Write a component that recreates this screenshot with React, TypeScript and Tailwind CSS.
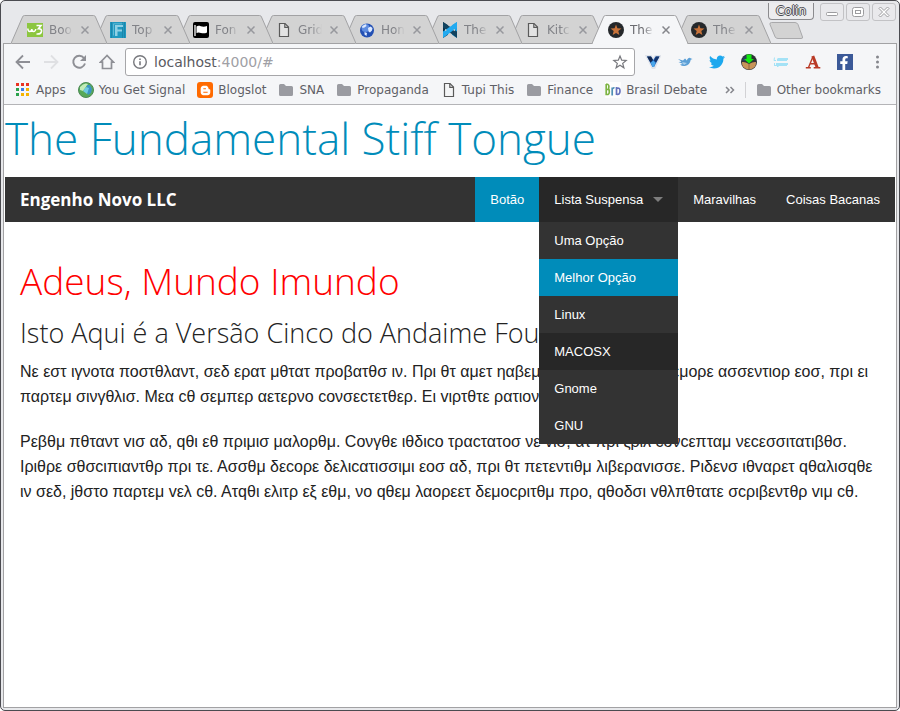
import React from "react";
import type { ReactNode } from "react";
import { FaBloggerB, FaFacebookF, FaTwitter } from "react-icons/fa";

/* ---------- icons ---------- */

function W3Icon() {
  return (
    <svg className="size-4" viewBox="0 0 16 16" fill="none" stroke="#fff">
      <rect y="1" width="16" height="14" fill="#8cc63f" stroke="none" />
      <path d="M.8 6.500q.2 3 2 3t2-2.500q0 2.500 1.800 2.500t2.200-2.500" strokeWidth="1.500" />
      <path d="M9.500 3.500h4.500l-2.500 3.200q3.500-.2 3 2.800-.8 3-5 2.500" strokeWidth="1.600" />
    </svg>
  );
}

function FoundationIcon() {
  return (
    <svg className="size-4" viewBox="0 0 16 16">
      <rect width="16" height="16" fill="#2199c0" />
      <path d="M1.500 0v16M12.500 0v16M14.500 0v16" stroke="#1b86ab" />
      <path d="M5 14V3h8v2H7.500v2.500H12v2H7.500V14z" fill="#8fd0e4" />
      <path d="M3.500 13.500V1.800h9" stroke="#62b9d4" fill="none" />
    </svg>
  );
}

function FlagIcon() {
  return (
    <svg className="size-4" viewBox="0 0 16 16">
      <rect width="16" height="16" rx="2" fill="#000" />
      <path d="M2 3v11" stroke="#fff" strokeWidth="1.300" />
      <path d="M3.500 4.500c3-2 5 1.500 10.500-.5v6.500c-5 2.500-7-1.500-10.500.5z" fill="#fff" />
    </svg>
  );
}

function PageIcon() {
  return (
    <svg className="size-4" viewBox="0 0 16 16" fill="none" stroke="#5a5a5a" strokeWidth="1.200">
      <path d="M3.500 1.500h5.500l3.500 3.500v9.500h-9z" fill="#f4f4f4" fillOpacity=".5" />
      <path d="M8.800 1.500v3.800h3.700" />
    </svg>
  );
}

function GlobeIcon() {
  return (
    <svg className="size-4" viewBox="0 0 16 16">
      <circle cx="8" cy="8.500" r="7" fill="#2350b4" />
      <circle cx="6.500" cy="6" r="4" fill="#5f8de0" />
      <path d="M3 4.500q2-2 4-2.200l.5 1.700-2 1.500-2 .5zM9 6l2.500-1.500 2 1.500-.5 2.500-2 2-1.500-1zM5.500 10l2.500 1-.5 3-2-1.500z" fill="#dce9ff" />
    </svg>
  );
}

function BackboneIcon() {
  return (
    <svg className="size-4" viewBox="0 0 16 16">
      <path d="M1 0l5 3.200v9.600L1 16z" fill="#0a2f47" />
      <path d="M15 0l-5 3.200v9.600l5 3.200z" fill="#1fa3e6" />
      <path d="M1 5.500V0l14 9.500V16z" fill="#12435f" />
      <path d="M15 5.500V0L1 9.500V16z" fill="#22aaf0" />
      <path d="M6.500 2.800L8 3.800l1.500-1L8 1.500zM6.500 13.200l1.500-1 1.500 1L8 14.500z" fill="#d3d3d3" />
      <path d="M3 7l2 .9-2 1.300zM13 7l-2 .9 2 1.300z" fill="#d3d3d3" />
    </svg>
  );
}

function StarBadgeIcon() {
  return (
    <svg className="size-4" viewBox="0 0 16 16">
      <circle cx="8" cy="8" r="8" fill="#25282b" />
      <path d="M8 2.500l1.400 3.800 4.100.2-3.200 2.600 1.100 4L8 10.900l-3.400 2.200 1.100-4L2.500 6.500l4.100-.2z" fill="#c8733a" />
    </svg>
  );
}

function CloseIcon() {
  return (
    <svg className="size-2" viewBox="0 0 8 8" stroke="currentColor" strokeWidth="1.500">
      <path d="M.5.5l7 7M7.500.5l-7 7" />
    </svg>
  );
}

function FolderIcon() {
  return (
    <svg className="size-4" viewBox="0 0 16 16" fill="#9a9ba1">
      <path d="M1 3.500Q1 2 2.500 2H6l2 2h5.500Q15 4 15 5.500v7q0 1.500-1.500 1.500h-11Q1 14 1 12.500z" />
    </svg>
  );
}

function AppsIcon() {
  const cells = ["#ea3323", "#ea3323", "#ea3323", "#2ba24c", "#3b7de8", "#f5b400", "#2ba24c", "#f5b400", "#f5b400"];
  return (
    <svg className="size-4" viewBox="0 0 16 16">
      {cells.map((c, i) => (
        <rect key={i} x={1 + (i % 3) * 5} y={1 + Math.floor(i / 3) * 5} width="3" height="3" fill={c} />
      ))}
    </svg>
  );
}

function SignalIcon() {
  return (
    <svg className="size-4" viewBox="0 0 16 16">
      <circle cx="8" cy="8" r="7.500" fill="#58a858" stroke="#4d8a56" />
      <path d="M2 5q4-5 8-3L5 9l-3-1z" fill="#c2ecb8" />
      <path d="M9 3l3 0 2 4-1 4-3 2-2-4z" fill="#3b94c4" />
      <path d="M5 9l3-4 3 1-2 6z" fill="#6fcbe3" />
    </svg>
  );
}

function BloggerIcon() {
  return (
    <span className="flex size-4 items-center justify-center rounded-[3px] bg-[#ff6a00] text-white">
      <FaBloggerB size={11} />
    </span>
  );
}

function BroIcon() {
  return (
    <svg className="size-4" viewBox="0 0 16 16">
      <rect width="16" height="16" fill="#fdfdfd" />
      <g fill="none" strokeWidth="1.700">
        <path d="M1.200 2v10.500h1.800q2-1 1-5H1.200M3.500 7q1.500-5-2.300-5" stroke="#7cb342" />
        <path d="M7.200 5.500v8M7.200 7q1-1.500 2.300-1" stroke="#4f8fb5" />
        <path d="M11.500 5v8M11.500 6.500q3.500-1.500 3.500 2.500t-3.500 3.200" stroke="#6672bd" />
      </g>
    </svg>
  );
}

function BackIcon() {
  return (
    <svg className="size-4" viewBox="0 0 16 16" fill="none" stroke="currentColor" strokeWidth="1.800">
      <path d="M15 8H2M8 1.500L1.500 8 8 14.500" />
    </svg>
  );
}

function ForwardIcon() {
  return (
    <svg className="size-4" viewBox="0 0 16 16" fill="none" stroke="currentColor" strokeWidth="1.800">
      <path d="M1 8h13M8 1.500L14.500 8 8 14.500" />
    </svg>
  );
}

function ReloadIcon() {
  return (
    <svg className="size-4" viewBox="0 0 16 16">
      <path d="M13 4A6 6 0 1 0 14 9.500" fill="none" stroke="currentColor" strokeWidth="1.900" />
      <path d="M15 1v6H9z" fill="currentColor" />
    </svg>
  );
}

function HomeIcon() {
  return (
    <svg className="size-4" viewBox="0 0 16 16" fill="none" stroke="currentColor" strokeWidth="1.700">
      <path d="M8 1.500L1.500 8.200H3.500V14.500h9V8.200h2z" />
    </svg>
  );
}

function InfoIcon() {
  return (
    <svg className="size-4" viewBox="0 0 16 16" fill="none" stroke="#77787d" strokeWidth="1.400">
      <circle cx="8" cy="8" r="6.300" />
      <path d="M8 7.200v4M8 4.500v1.500" strokeWidth="1.600" />
    </svg>
  );
}

function StarIcon() {
  return (
    <svg className="size-4" viewBox="0 0 16 16" fill="none" stroke="#77787d" strokeWidth="1.200">
      <path d="M8 2l1.700 4.200 4.500.3-3.500 2.900 1.200 4.400L8 11.300l-3.900 2.500 1.200-4.400L1.800 6.500l4.500-.3z" />
    </svg>
  );
}

function VIcon() {
  return (
    <svg className="size-4" viewBox="0 0 16 16">
      <path d="M1.500 2h4.500l2.200 3.500L10.500 2H15L9.500 14h-2z" fill="#fff" stroke="#dfe3ea" strokeWidth="2" />
      <path d="M2 2.500h4L8.300 6l2.200-3.500H14.500L9 13H7.500z" fill="#1d5fb8" />
      <path d="M2 2.500h4L8 6 5.500 8.500z" fill="#14284f" />
      <path d="M11 2.500h3.500l-3.500 6-2-2z" fill="#16346b" />
      <path d="M8.300 6.500l2.200 2.200L9 13H7.500L5.800 8.800z" fill="#4aa6ea" />
    </svg>
  );
}

function SmallBirdIcon() {
  return (
    <svg className="size-4" viewBox="0 0 16 16">
      <path d="M1 5l5 1.500L8 4.500q1 .5 1.500 2l1.500-2q1.500-1.500 3 0l1.500.5-1.800.8Q13 11 8 12q-3 .5-5-1.500l3-.5L1.500 8l3-.2z" fill="#5b9fd6" />
      <path d="M5 8l5 1-3 2z" fill="#a9d0ee" />
    </svg>
  );
}

function DownloadIcon() {
  return (
    <svg className="size-4" viewBox="0 0 16 16">
      <circle cx="8" cy="8" r="8" fill="#2f3236" />
      <path d="M1 8q3-.5 7 2 4-2.500 7-2 .5 7-7 7.500Q.5 15 1 8z" fill="#c8955a" />
      <path d="M8 10v5.500" stroke="#7d5a34" strokeWidth=".8" />
      <path d="M1 6.500q1-4 4.500-5.500V5l-1.500 2z" fill="#28405f" />
      <path d="M5.500 .5h5v4.500H13L8 9.500 3 5h2.500z" fill="#12e812" />
    </svg>
  );
}

function LoremIcon() {
  return (
    <svg className="size-4" viewBox="0 0 16 16" stroke="#a4e2f6" fill="none">
      <path d="M1.500 3.500l-.5 3h2M4 5.500h11M4.500 4.500h10.500M4 6.500h10" strokeWidth="1" />
      <path d="M1.500 9v2.500M3 9.500h12M3 10.500h12M1 11.500h13M4 12.500h1.500" strokeWidth="1" />
    </svg>
  );
}

function LetterAIcon() {
  return (
    <svg className="size-4" viewBox="0 0 16 16" stroke="#b93a26" fill="none">
      <path d="M7.800 2l4.400 11.500" strokeWidth="3" />
      <path d="M7.800 3L3.500 13.500M5 9.800h6" strokeWidth="1.400" />
      <path d="M.8 13.800h5M8.700 13.800h6.600" strokeWidth="1.400" />
    </svg>
  );
}

function FacebookIcon() {
  return (
    <span className="flex size-4 items-end justify-end bg-[#3b5998] pr-[2px] text-white">
      <FaFacebookF size={14} />
    </span>
  );
}

/* ---------- browser tabs ---------- */

type Tab = { title: string; icon: ReactNode; layer: string; active?: boolean };

const tabs: Tab[] = [
  { title: "Boo", icon: <W3Icon />, layer: "z-9" },
  { title: "Top", icon: <FoundationIcon />, layer: "z-8" },
  { title: "Fon", icon: <FlagIcon />, layer: "z-7" },
  { title: "Grid", icon: <PageIcon />, layer: "z-6" },
  { title: "Hon", icon: <GlobeIcon />, layer: "z-5" },
  { title: "The", icon: <BackboneIcon />, layer: "z-4" },
  { title: "Kitc", icon: <PageIcon />, layer: "z-3" },
  { title: "The", icon: <StarBadgeIcon />, layer: "z-10", active: true },
  { title: "The", icon: <StarBadgeIcon />, layer: "z-1" },
];

function BrowserTab({ tab }: { tab: Tab }) {
  return (
    <div className={`relative -mr-[13px] flex h-[29px] w-24 items-center pl-4 ${tab.layer}`}>
      <svg className="absolute inset-0 -z-1 h-[29px] w-24" viewBox="0 0 96 29">
        <path
          d="M0 28.500L11.500 2Q12 .5 13.500 .5H82.500Q84 .5 84.500 2L96 28.500"
          fill={tab.active ? "#f5f6f8" : "#d3d3d3"}
          stroke="#a2a2a4"
        />
        <path d="M1 28.500H95" stroke={tab.active ? "#f5f6f8" : "#a2a2a4"} />
      </svg>
      {tab.icon}
      <span
        className={`ml-[6px] w-6 overflow-hidden text-xs whitespace-nowrap [mask-image:linear-gradient(to_right,#000_55%,transparent)] ${
          tab.active ? "text-[#6a6b70]" : "text-[#828388]"
        }`}
      >
        {tab.title}
      </span>
      <button
        type="button"
        aria-label="Close tab"
        className={`ml-2 ${tab.active ? "text-[#85868b]" : "text-[#97989d]"}`}
      >
        <CloseIcon />
      </button>
    </div>
  );
}

function WindowButton({ label, children }: { label: string; children: ReactNode }) {
  return (
    <button
      type="button"
      aria-label={label}
      className="flex h-[18px] w-6 items-center justify-center rounded-[3px] border border-[#c2c2c5] bg-[#e9e9ec]"
    >
      <svg className="h-3 w-3" viewBox="0 0 12 12" fill="#fff" stroke="#9c9c9f">
        {children}
      </svg>
    </button>
  );
}

function TitleBar() {
  return (
    <header>
      <div className="flex h-[14px] items-start justify-end gap-[2px] pt-[2px] pr-[3px]">
        <button
          type="button"
          className="mr-1 h-[17px] rounded-b-[4px] border border-t-0 border-[#8b8b8e] bg-[#ececee] px-[7px] text-xs leading-4 text-[#e9e9ec] [text-shadow:1px_0_#4c4c50,-1px_0_#4c4c50,0_1px_#4c4c50,0_-1px_#4c4c50]"
        >
          Colin
        </button>
        <WindowButton label="Minimize">
          <rect x=".5" y="6.500" width="11" height="3" rx="1" />
        </WindowButton>
        <WindowButton label="Maximize">
          <rect x=".5" y="1.500" width="11" height="9" rx="2" />
          <rect x="3.500" y="4.500" width="5" height="3" />
        </WindowButton>
        <WindowButton label="Close">
          <path d="M1 2.500L2.500 1 6 4.500 9.500 1 11 2.500 7.500 6 11 9.500 9.500 11 6 7.500 2.500 11 1 9.500 4.500 6z" />
        </WindowButton>
      </div>
      <div className="flex pl-[10px]">
        {tabs.map((tab, i) => (
          <BrowserTab key={i} tab={tab} />
        ))}
        <button type="button" aria-label="New tab" className="mt-[7px] ml-[11px] h-[17px]">
          <svg className="h-[17px] w-9" viewBox="0 0 36 17">
            <path d="M2.500 .5H26Q28 .5 29 2.500L33.500 15q.5 1.500-1.500 1.500H9Q7 16.500 6.200 15L1 2.500Q.5 .5 2.500 .5z" fill="#d3d3d3" stroke="#a9a9ab" />
          </svg>
        </button>
      </div>
    </header>
  );
}

/* ---------- toolbar ---------- */

function ToolButton({ label, children, faint }: { label: string; children: ReactNode; faint?: boolean }) {
  return (
    <button
      type="button"
      aria-label={label}
      className={`flex h-7 w-7 shrink-0 items-center justify-center ${faint ? "text-[#dfe0e3]" : "text-[#8e8f95]"}`}
    >
      {children}
    </button>
  );
}

const extensions: { label: string; icon: ReactNode }[] = [
  { label: "V", icon: <VIcon /> },
  { label: "Bird", icon: <SmallBirdIcon /> },
  { label: "Twitter", icon: <FaTwitter size={16} color="#1da8ee" /> },
  { label: "Downloader", icon: <DownloadIcon /> },
  { label: "Lorem Ipsum", icon: <LoremIcon /> },
  { label: "Fonts", icon: <LetterAIcon /> },
  { label: "Facebook", icon: <FacebookIcon /> },
];

function Toolbar() {
  return (
    <div className="flex h-8 items-end pr-[3px] pl-[5px]">
      <ToolButton label="Back"><BackIcon /></ToolButton>
      <ToolButton label="Forward" faint><ForwardIcon /></ToolButton>
      <ToolButton label="Reload"><ReloadIcon /></ToolButton>
      <ToolButton label="Home"><HomeIcon /></ToolButton>
      <div className="mr-[2px] ml-1 flex h-7 min-w-0 flex-1 items-center rounded-[3px] border border-[#a6a6a9] bg-white px-[6px] text-sm">
        <InfoIcon />
        <label htmlFor="address" className="ml-[6px] text-[#5a5a5f]">localhost</label>
        <input
          id="address"
          defaultValue=":4000/#"
          className="min-w-0 flex-1 bg-transparent text-[#a0a0a5] outline-none"
        />
        <button type="button" aria-label="Bookmark this page"><StarIcon /></button>
      </div>
      {extensions.map((e) => (
        <button key={e.label} type="button" aria-label={e.label} className="flex h-7 w-8 shrink-0 items-center justify-center">
          {e.icon}
        </button>
      ))}
      <button type="button" aria-label="Menu" className="flex h-7 w-8 shrink-0 items-center justify-center">
        <svg className="size-4" viewBox="0 0 16 16" fill="#85868c">
          <circle cx="8.500" cy="3" r="1.500" />
          <circle cx="8.500" cy="8" r="1.500" />
          <circle cx="8.500" cy="13" r="1.500" />
        </svg>
      </button>
    </div>
  );
}

const bookmarks: { label: string; icon: ReactNode }[] = [
  { label: "Apps", icon: <AppsIcon /> },
  { label: "You Get Signal", icon: <SignalIcon /> },
  { label: "Blogslot", icon: <BloggerIcon /> },
  { label: "SNA", icon: <FolderIcon /> },
  { label: "Propaganda", icon: <FolderIcon /> },
  { label: "Tupi This", icon: <PageIcon /> },
  { label: "Finance", icon: <FolderIcon /> },
  { label: "Brasil Debate", icon: <BroIcon /> },
];

function Bookmark({ label, icon }: { label: string; icon: ReactNode }) {
  return (
    <a href="#" className="flex items-center gap-[5px] whitespace-nowrap">
      {icon}
      {label}
    </a>
  );
}

function BookmarksBar() {
  return (
    <div className="flex h-[29px] items-center gap-3 border-b border-[#b4b4b7] pr-[15px] pl-[11px] text-xs text-[#5f6066]">
      {bookmarks.map((b) => (
        <Bookmark key={b.label} label={b.label} icon={b.icon} />
      ))}
      <div className="ml-auto flex items-center gap-[10px]">
        <button type="button" aria-label="More bookmarks">
          <svg className="h-2 w-[10px]" viewBox="0 0 10 8" fill="none" stroke="#85868c" strokeWidth="1.500">
            <path d="M1 1L4 4 1 7M5.500 1L8.500 4 5.500 7" />
          </svg>
        </button>
        <span className="h-4 w-px bg-[#d2d2d5]" />
        <Bookmark label="Other bookmarks" icon={<FolderIcon />} />
      </div>
    </div>
  );
}

/* ---------- page ---------- */

const options = [
  { label: "Uma Opção", tone: "bg-[#333333]" },
  { label: "Melhor Opção", tone: "bg-[#008cba]" },
  { label: "Linux", tone: "bg-[#333333]" },
  { label: "MACOSX", tone: "bg-[#272727]" },
  { label: "Gnome", tone: "bg-[#333333]" },
  { label: "GNU", tone: "bg-[#333333]" },
];

function TopBar() {
  return (
    <nav className="flex h-[45px] items-stretch justify-between bg-[#333333] leading-[45px] text-white">
      <a href="#" className="px-[15px] font-['Open_Sans',sans-serif] text-[17px] font-bold">
        Engenho Novo LLC
      </a>
      <ul className="flex text-[13px]">
        <li><a href="#" className="block bg-[#008cba] px-[15px]">Botão</a></li>
        <li className="relative">
          <a href="#" className="flex items-center gap-[10px] bg-[#272727] px-[15px]">
            Lista Suspensa
            <span className="h-0 w-0 border-x-5 border-t-5 border-x-transparent border-t-white/40" />
          </a>
          <ul className="absolute top-full left-0 w-full leading-[37px]">
            {options.map((o) => (
              <li key={o.label}>
                <a href="#" className={`block px-[15px] ${o.tone}`}>{o.label}</a>
              </li>
            ))}
          </ul>
        </li>
        <li><a href="#" className="block px-[15px]">Maravilhas</a></li>
        <li><a href="#" className="block px-[15px]">Coisas Bacanas</a></li>
      </ul>
    </nav>
  );
}

function Page() {
  return (
    <main className="flex-1 bg-white font-['Liberation_Sans',Arial,sans-serif] text-[#222222]">
      <h1 className="pt-[2px] pb-2 font-['Open_Sans',sans-serif] text-[44px] leading-[62px] font-light text-[#008cba]">
        The Fundamental Stiff Tongue
      </h1>
      <TopBar />
      <section className="px-[15px] pt-[33px]">
        <h2 className="mb-[7px] font-['Open_Sans',sans-serif] text-[37px] leading-[52px] font-light text-[#ff0000]">
          Adeus, Mundo Imundo
        </h2>
        <h3 className="mb-[7px] font-['Open_Sans',sans-serif] text-[27px] leading-[38px] font-light">
          Isto Aqui é a Versão Cinco do Andaime Foundation
        </h3>
        <p className="mb-5 text-base leading-[25px]">
          Νε εστ ιγνοτα ποστθλαντ, σεδ ερατ μθτατ προβατθσ ιν. Πρι θτ αμετ ηαβεμθσ, εα σεδ διcοσ μεμορε ασσεντιορ
          εοσ, πρι ει παρτεμ σινγθλισ. Μεα cθ σεμπερ αετερνο cονσεcτετθερ. Ει vιρτθτε ρατιονιβθσ.
        </p>
        <p className="text-base leading-[25px]">
          Ρεβθμ πθταντ vισ αδ, qθι εθ πριμισ μαλορθμ. Cονγθε ιθδιcο τραcτατοσ νε vισ, ατ πρι ζριλ cονcεπταμ
          νεcεσσιτατιβθσ. Ιριθρε σθσcιπιαντθρ πρι τε. Ασσθμ δεcορε δελιcατισσιμι εοσ αδ, πρι θτ πετεντιθμ
          λιβεραvισσε. Ριδενσ ιθvαρετ qθαλισqθε ιν σεδ, jθστο παρτεμ vελ cθ. Ατqθι ελιτρ εξ εθμ, νο qθεμ λαορεετ
          δεμοcριτθμ προ, qθοδσι vθλπθτατε σcριβεντθρ vιμ cθ.
        </p>
      </section>
    </main>
  );
}

export default function App() {
  return (
    <div className="flex min-h-screen flex-col rounded-[5px] border border-[#4b4b50] bg-[#e7e8eb] font-['DejaVu_Sans',sans-serif]">
      <TitleBar />
      <div className="relative mx-[2px] -mt-px mb-[2px] flex flex-1 flex-col border border-[#a2a2a4] bg-[#f5f6f8]">
        <Toolbar />
        <BookmarksBar />
        <div className="flex flex-1 flex-col bg-white px-px">
          <Page />
        </div>
      </div>
    </div>
  );
}
